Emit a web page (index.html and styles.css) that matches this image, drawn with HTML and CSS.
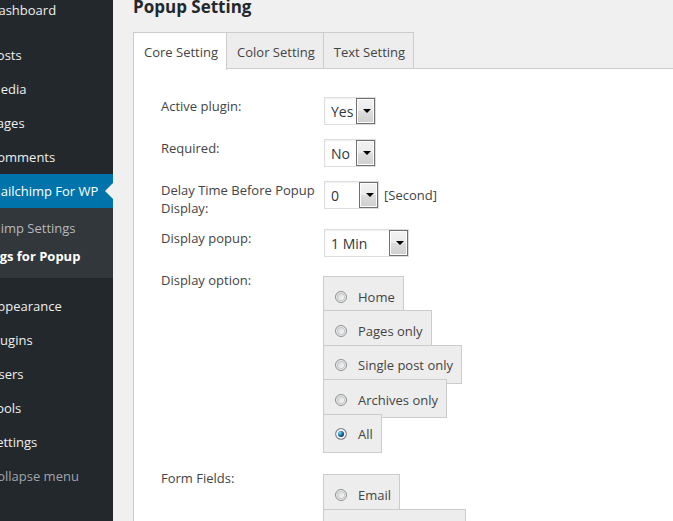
FILE: index.html
```html
<!DOCTYPE html>
<html lang="en">
<head>
<meta charset="utf-8">
<title>Popup Setting</title>
<link rel="stylesheet" href="styles.css">
</head>
<body>
<div class="admin">
  <nav class="menu" aria-label="Main menu">
    <a class="menu-item" href="#">Dashboard</a>
    <a class="menu-item menu-gap" href="#">Posts</a>
    <a class="menu-item" href="#">Media</a>
    <a class="menu-item" href="#">Pages</a>
    <a class="menu-item" href="#">Comments</a>
    <a class="menu-item current" href="#">Mailchimp For WP</a>
    <div class="submenu">
      <a class="submenu-item" href="#">Mailchimp Settings</a>
      <a class="submenu-item selected" href="#">Settings for Popup</a>
    </div>
    <a class="menu-item menu-gap" href="#">Appearance</a>
    <a class="menu-item" href="#">Plugins</a>
    <a class="menu-item" href="#">Users</a>
    <a class="menu-item" href="#">Tools</a>
    <a class="menu-item" href="#">Settings</a>
    <button class="menu-item collapse" type="button">Collapse menu</button>
  </nav>
  <main class="content">
    <h1 class="title">Popup Setting</h1>
    <div class="tabs">
      <a class="tab active" href="#">Core Setting</a>
      <a class="tab" href="#">Color Setting</a>
      <a class="tab" href="#">Text Setting</a>
    </div>
    <form class="panel">
      <div class="row">
        <label class="name" for="active">Active plugin:</label>
        <div class="control">
          <span class="picker"><select id="active"><option>Yes</option><option>No</option></select></span>
        </div>
      </div>
      <div class="row">
        <label class="name" for="required">Required:</label>
        <div class="control">
          <span class="picker"><select id="required"><option>No</option><option>Yes</option></select></span>
        </div>
      </div>
      <div class="row">
        <label class="name" for="delay">Delay Time Before Popup Display:</label>
        <div class="control">
          <span class="picker picker-medium"><select id="delay"><option>0</option><option>5</option></select></span>
          <span>[Second]</span>
        </div>
      </div>
      <div class="row">
        <label class="name" for="interval">Display popup:</label>
        <div class="control">
          <span class="picker picker-wide"><select id="interval"><option>1 Min</option><option>5 Min</option></select></span>
        </div>
      </div>
      <div class="row" role="radiogroup" aria-labelledby="display-name">
        <span class="name" id="display-name">Display option:</span>
        <div class="options">
          <label class="option"><input type="radio" name="display">Home</label>
          <label class="option"><input type="radio" name="display">Pages only</label>
          <label class="option"><input type="radio" name="display">Single post only</label>
          <label class="option"><input type="radio" name="display">Archives only</label>
          <label class="option"><input type="radio" name="display" checked>All</label>
        </div>
      </div>
      <div class="row" role="radiogroup" aria-labelledby="fields-name">
        <span class="name" id="fields-name">Form Fields:</span>
        <div class="options options-short">
          <label class="option"><input type="radio" name="fields">Email</label>
          <label class="option"><input type="radio" name="fields">Name and Email</label>
        </div>
      </div>
    </form>
  </main>
</div>
</body>
</html>
```
FILE: styles.css
```css
* { box-sizing: border-box; }

html, body { height: 100%; }

body {
  margin: 0;
  overflow: hidden;
  background: #f0f0f0;
  color: #444;
  font: 13px/18px "Open Sans", "Noto Sans", sans-serif;
}

a { color: inherit; text-decoration: none; }

.admin { display: flex; height: 100%; }

/* Side menu, partly scrolled out to the left */
.menu {
  flex: none;
  width: 160px;
  margin-top: -7px;
  margin-left: -47px;
  background: #23282d;
  color: #eee;
}

.menu-item {
  display: block;
  position: relative;
  padding: 8px 0 8px 36px;
  white-space: nowrap;
}

.menu-gap { margin-top: 11px; }

.current { background: #0073aa; color: #fff; }

.current::after {
  content: "";
  position: absolute;
  top: 9px;
  right: 0;
  border: 8px solid transparent;
  border-left-width: 0;
  border-right-color: #f0f0f0;
}

.submenu { padding: 6px 0 8px; background: #32373c; }

.submenu-item {
  display: block;
  padding: 5px 8px;
  color: #b4b9be;
  white-space: nowrap;
}

.selected { color: #fff; font-weight: 700; }

.collapse {
  width: 100%;
  border: 0;
  background: none;
  color: #a0a5aa;
  font: inherit;
  text-align: left;
}

.content {
  flex: 1;
  display: flex;
  flex-direction: column;
  min-width: 0;
  padding-left: 20px;
}

.title {
  margin: -5px 0 13px;
  color: #23282d;
  font-size: 17px;
  line-height: 24px;
}

.tabs { display: flex; }

.tab {
  margin-right: -1px;
  padding: 10px 8px 7px 10px;
  border: 1px solid #ccc;
  border-bottom: 0;
  background: #ededed;
}

.active {
  position: relative;
  margin-bottom: -2px;
  background: #fff;
}

.panel {
  flex: 1;
  padding: 28px 0 0 27px;
  border: 1px solid #ccc;
  border-width: 1px 0 0 1px;
  background: #fff;
}

.row {
  display: grid;
  grid-template-columns: 162px 1fr;
}

.name { padding-bottom: 12px; }

.control {
  display: flex;
  align-items: center;
  align-self: start;
  gap: 5px;
  padding: 0 0 14px 1px;
}

.picker {
  position: relative;
  width: 52px;
  height: 28px;
}

.picker-medium { width: 55px; }
.picker-wide { width: 85px; }

.picker select {
  appearance: none;
  width: 100%;
  height: 100%;
  margin: 0;
  padding: 1px 18px 0 6px;
  border: 1px solid #ddd;
  border-radius: 0;
  background: #fff;
  box-shadow: inset 0 1px 2px #eee;
  color: #32373c;
  font: 14px "Open Sans", sans-serif;
}

.picker::before {
  content: "";
  position: absolute;
  top: 1px;
  right: 1px;
  bottom: 1px;
  width: 17px;
  border: 1px solid #707070;
  background: linear-gradient(#f2f2f2, #ebebeb 50%, #ddd 50%, #cfcfcf);
  box-shadow: inset 0 0 0 1px #fcfcfc;
  pointer-events: none;
}

.picker::after {
  content: "";
  position: absolute;
  top: 12px;
  right: 5px;
  border: 4px solid transparent;
  border-top-color: #000;
  border-bottom-width: 0;
  pointer-events: none;
}

/* Rows are shorter than the boxes, so each box overlaps the one above */
.options {
  display: grid;
  grid-auto-rows: 1fr;
  justify-items: start;
  align-items: start;
  height: 172px;
  margin: 5px 0 21px;
}

.options-short { height: 69px; margin-bottom: 0; }

.options > * { min-height: 0; }

.option {
  display: flex;
  align-items: center;
  gap: 11px;
  height: 39px;
  margin-bottom: -5px;
  padding: 2px 8px 0 11px;
  border: 1px solid #ccc;
  background: #ededed;
}

.option input {
  appearance: none;
  width: 12px;
  height: 12px;
  margin: 0;
  border: 1px solid #8e8f8f;
  border-radius: 50%;
  background: linear-gradient(135deg, #c4c8cb, #f8f8f8 75%);
  box-shadow: inset 0 0 0 1px #f4f4f4, inset 0 0 0 2px #c3c6c8;
}

.option input:checked {
  background: radial-gradient(circle at 4px 4px, #8fdcf5 0, #2088bd 2px, #0b3a5c 4px);
  box-shadow: inset 0 0 0 2px #f4f4f4;
}
```
